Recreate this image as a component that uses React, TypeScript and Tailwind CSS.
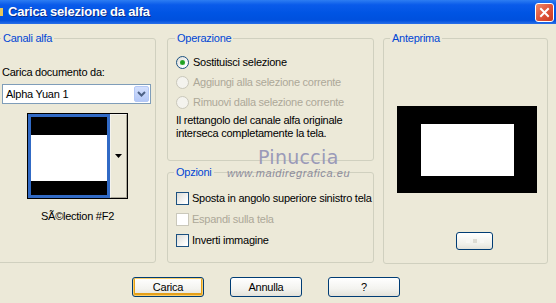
import React from 'react';

function Radio({ checked, disabled }: { checked?: boolean; disabled?: boolean }) {
  return (
    <span
      className={
        'relative inline-block shrink-0 w-[13px] h-[13px] rounded-full border ' +
        (disabled
          ? 'border-[#CAC8BB] bg-[#F4F3EE]'
          : 'border-[#1C5180] bg-[linear-gradient(135deg,#DCDCD7_0%,#FFFFFF_80%)]')
      }
    >
      {checked && (
        <span className="absolute left-[3px] top-[3px] w-[5px] h-[5px] rounded-full bg-[#21A121] shadow-[inset_0_0_1px_#7CD37C]" />
      )}
    </span>
  );
}

function Check({ disabled }: { disabled?: boolean }) {
  return (
    <span
      className={
        'inline-block shrink-0 w-[13px] h-[13px] border ' +
        (disabled
          ? 'border-[#CAC8BB] bg-white'
          : 'border-[#1C5180] bg-[linear-gradient(135deg,#DCDCD7_0%,#FFFFFF_85%)]')
      }
    />
  );
}

function XpButton({ label, isDefault }: { label: string; isDefault?: boolean }) {
  return (
    <button
      className={
        'w-[72px] h-[20px] rounded-[3px] border border-[#003C74] text-[11px] text-black leading-none bg-[linear-gradient(180deg,#FFFFFF_0%,#F3F3EF_60%,#E3E2DA_100%)] ' +
        (isDefault ? 'shadow-[inset_0_0_0_1px_#F8CE6B,inset_0_-1px_0_2px_#E5A01A]' : '')
      }
    >
      {label}
    </button>
  );
}

export default function App() {
  return (
    <div className="relative w-[556px] h-[303px] overflow-hidden bg-[#ECE9D8] font-['Liberation_Sans',Arial,sans-serif] text-[11px] tracking-[-0.25px] text-black whitespace-nowrap">
      {/* Title bar */}
      <div className="h-[24px] flex items-center bg-[linear-gradient(180deg,#2D7DF2_0%,#0A5BEA_20%,#0054E3_55%,#0050DD_85%,#2A6FE8_100%)]">
        <span className="w-[3px] h-[8px] bg-[#E8C85A] mr-[5px]" />
        <span className="text-white font-bold text-[13px] tracking-[-0.2px] [text-shadow:1px_1px_0_#0A2A8A]">
          Carica selezione da alfa
        </span>
        <span className="ml-auto mr-[2px] w-[19px] h-[19px] rounded-[3px] border border-white bg-[linear-gradient(135deg,#F08A6B_0%,#E0553C_50%,#C93A20_100%)] flex items-center justify-center">
          <svg width="11" height="11" viewBox="0 0 11 11">
            <path d="M2 2 L9 9 M9 2 L2 9" stroke="white" strokeWidth="2" strokeLinecap="square" />
          </svg>
        </span>
      </div>

      <div className="flex pt-[8px]">
        {/* Canali alfa */}
        <fieldset className="ml-[-5px] w-[161px] h-[231px] border border-[#D0D0BF] rounded-[3px]">
          <legend className="ml-[5px] px-[2px] text-[#0046D5] leading-[13px]">Canali alfa</legend>
          <div className="pl-[6px]">
            <div className="mt-[21px] leading-[13px]">Carica documento da:</div>
            <div className="mt-[5px] w-[149px] h-[20px] border border-[#7F9DB9] bg-white flex items-center">
              <span className="pl-[3px]">Alpha Yuan 1</span>
              <span className="ml-auto mr-[1px] w-[15px] h-[16px] rounded-[2px] border border-[#B4C8F5] bg-[linear-gradient(180deg,#D4E0FD_0%,#B4C8F7_100%)] flex items-center justify-center">
                <svg width="9" height="6" viewBox="0 0 9 6">
                  <path d="M1 1 L4.5 4.5 L8 1" stroke="#4D6185" strokeWidth="2" fill="none" />
                </svg>
              </span>
            </div>
            <div className="mt-[9px] ml-[25px] w-[101px] h-[86px] border border-black flex">
              <div className="w-[82px] h-full border-[3px] border-[#316AC5] bg-white flex flex-col justify-between">
                <div className="h-[18px] bg-black" />
                <div className="h-[14px] bg-black" />
              </div>
              <div className="flex-1 border border-[#F4F3EE] border-r-[#ACA899] border-b-[#ACA899] flex items-center justify-center">
                <svg width="7" height="4" viewBox="0 0 7 4">
                  <path d="M0 0 H7 L3.5 4 Z" fill="black" />
                </svg>
              </div>
            </div>
            <div className="mt-[11px] ml-[25px] w-[101px] text-center leading-[13px]">SÃ©lection #F2</div>
          </div>
        </fieldset>

        {/* Middle column */}
        <div className="ml-[11px] w-[207px] flex flex-col gap-[5px]">
          <fieldset className="h-[129px] border border-[#D0D0BF] rounded-[3px]">
            <legend className="ml-[7px] px-[2px] text-[#0046D5] leading-[13px]">Operazione</legend>
            <div className="pl-[8px] pt-[7px]">
              <div className="h-[20px] flex items-center gap-[4px]">
                <Radio checked />
                <span>Sostituisci selezione</span>
              </div>
              <div className="h-[20px] flex items-center gap-[4px] text-[#ACA899]">
                <Radio disabled />
                <span>Aggiungi alla selezione corrente</span>
              </div>
              <div className="h-[20px] flex items-center gap-[4px] text-[#ACA899]">
                <Radio disabled />
                <span>Rimuovi dalla selezione corrente</span>
              </div>
              <p className="mt-[2px] leading-[13px]">
                Il rettangolo del canale alfa originale
                <br />
                interseca completamente la tela.
              </p>
            </div>
          </fieldset>
          <fieldset className="h-[97px] border border-[#D0D0BF] rounded-[3px]">
            <legend className="ml-[6px] px-[2px] text-[#0046D5] leading-[13px]">Opzioni</legend>
            <div className="pl-[8px] pt-[9px]">
              <div className="h-[21px] flex items-center gap-[3px]">
                <Check />
                <span>Sposta in angolo superiore sinistro tela</span>
              </div>
              <div className="h-[21px] flex items-center gap-[3px] text-[#ACA899]">
                <Check disabled />
                <span>Espandi sulla tela</span>
              </div>
              <div className="h-[21px] flex items-center gap-[3px]">
                <Check />
                <span>Inverti immagine</span>
              </div>
            </div>
          </fieldset>
        </div>

        {/* Anteprima */}
        <fieldset className="ml-[9px] w-[165px] h-[232px] border border-[#D0D0BF] rounded-[3px]">
          <legend className="ml-[6px] px-[2px] text-[#0046D5] leading-[13px]">Anteprima</legend>
          <div className="mt-[61px] ml-[13px] w-[140px] h-[87px] bg-black pl-[24px] pt-[18px]">
            <div className="w-[93px] h-[52px] bg-white" />
          </div>
          <div className="mt-[39px] ml-[72px] w-[37px] h-[18px] rounded-[3px] border border-[#003C74] bg-[linear-gradient(180deg,#FFFFFF_0%,#F0F0EA_70%,#E3E2DA_100%)] flex items-center justify-center gap-[3px]">
            <span className="w-[4px] h-[4px] bg-[#F7F7F4]" />
            <span className="w-[4px] h-[4px] bg-[#DCDBD3]" />
            <span className="w-[4px] h-[4px] bg-[#F7F7F4]" />
          </div>
        </fieldset>
      </div>

      {/* Buttons */}
      <div className="mt-[13px] pl-[132px] flex gap-[26px]">
        <XpButton label="Carica" isDefault />
        <XpButton label="Annulla" />
        <XpButton label="?" />
      </div>

      {/* Watermark */}
      <div className="absolute left-[258px] top-[146px] text-[19px] leading-[22px] tracking-[0.3px] text-[#9A9AB8] font-['DejaVu_Sans',sans-serif] pointer-events-none">
        Pinuccia
      </div>
      <div className="absolute left-[227px] top-[167px] text-[11px] leading-[12px] tracking-[0.6px] italic text-[#8C8C9C] pointer-events-none">
        www.maidiregrafica.eu
      </div>
    </div>
  );
}
